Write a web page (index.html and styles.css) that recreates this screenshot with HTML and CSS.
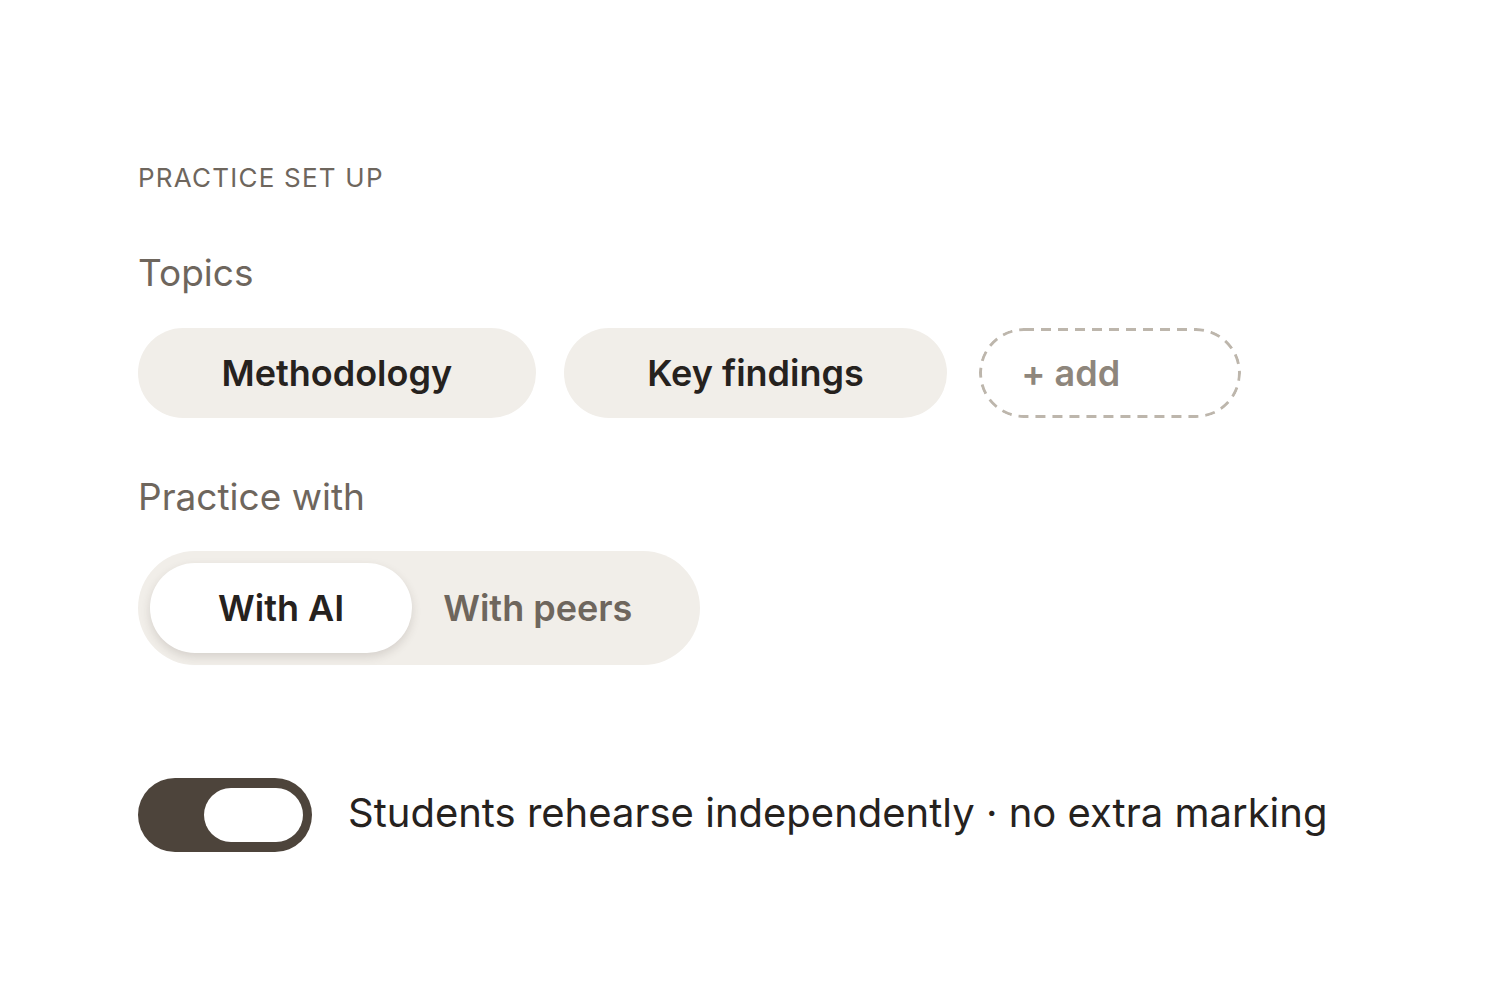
FILE: index.html
```html
<!DOCTYPE html>
<html lang="en">
<head>
    <meta charset="UTF-8">
    <meta name="viewport" content="width=device-width, initial-scale=1.0">
    <title>Practice set up</title>
    <link rel="stylesheet" href="styles.css">
</head>
<body>
    <div class="container">
        <div class="eyebrow">PRACTICE SET UP</div>

        <div class="label label-topics">Topics</div>
        <div class="chips">
            <span class="chip">Methodology</span>
            <span class="chip">Key findings</span>
            <span class="chip chip-add">+ add</span>
        </div>

        <div class="label label-with">Practice with</div>
        <div class="segmented">
            <span class="segment active">With AI</span>
            <span class="segment">With peers</span>
        </div>

        <div class="toggle-row">
            <span class="toggle"><span class="knob"></span></span>
            <span class="toggle-text">Students rehearse independently · no extra marking</span>
        </div>
    </div>
</body>
</html>
```

FILE: styles.css
```css
body {
    font-family: Inter, "Noto Sans", sans-serif;
    background: #ffffff;
    color: #26221e;
    margin: 0;
}
.container {
    padding: 162px 138px 0;
}
.eyebrow {
    font-size: 26px;
    line-height: 32px;
    letter-spacing: 0.047em;
    color: #6e665d;
}
.label {
    font-size: 37px;
    line-height: 44px;
    color: #6e665d;
}
.label-topics {
    margin-top: 57px;
}
.label-with {
    margin-top: 57px;
}
.chips {
    display: flex;
    gap: 28px;
    margin-top: 33px;
}
.chip {
    height: 90px;
    padding: 0 83.5px;
    display: flex;
    align-items: center;
    background: #f1eee9;
    border-radius: 45px;
    font-size: 36px;
    font-weight: 600;
    color: #26221e;
    box-sizing: border-box;
}
.chip-add {
    width: 262px;
    padding: 0 0 0 42px;
    margin-left: 4px;
    color: #8e867c;
    background: url("data:image/svg+xml,%3Csvg xmlns='http://www.w3.org/2000/svg' width='262' height='90'%3E%3Crect x='1.5' y='1.5' width='259' height='87' rx='43.5' fill='none' stroke='%23bdb6ac' stroke-width='3' stroke-dasharray='10 7'/%3E%3C/svg%3E") no-repeat;
}
.segmented {
    display: inline-flex;
    align-items: center;
    margin-top: 32px;
    padding: 12px;
    background: #f1eee9;
    border-radius: 58px;
}
.segment {
    height: 90px;
    display: flex;
    align-items: center;
    padding: 0 56px 0 31px;
    border-radius: 45px;
    font-size: 36px;
    font-weight: 600;
    color: #6e665d;
}
.segment.active {
    padding: 0 68px;
    background: #ffffff;
    color: #26221e;
    box-shadow: 0 4px 10px rgba(60, 50, 40, 0.15);
}
.toggle-row {
    display: flex;
    align-items: center;
    gap: 36px;
    margin-top: 113px;
}
.toggle {
    width: 174px;
    height: 74px;
    padding: 10px 9px;
    box-sizing: border-box;
    display: flex;
    justify-content: flex-end;
    background: #4d443b;
    border-radius: 37px;
}
.knob {
    width: 99px;
    height: 54px;
    background: #ffffff;
    border-radius: 27px;
}
.toggle-text {
    font-size: 40px;
    line-height: 48px;
    color: #26221e;
    margin-top: -4px;
}
```
